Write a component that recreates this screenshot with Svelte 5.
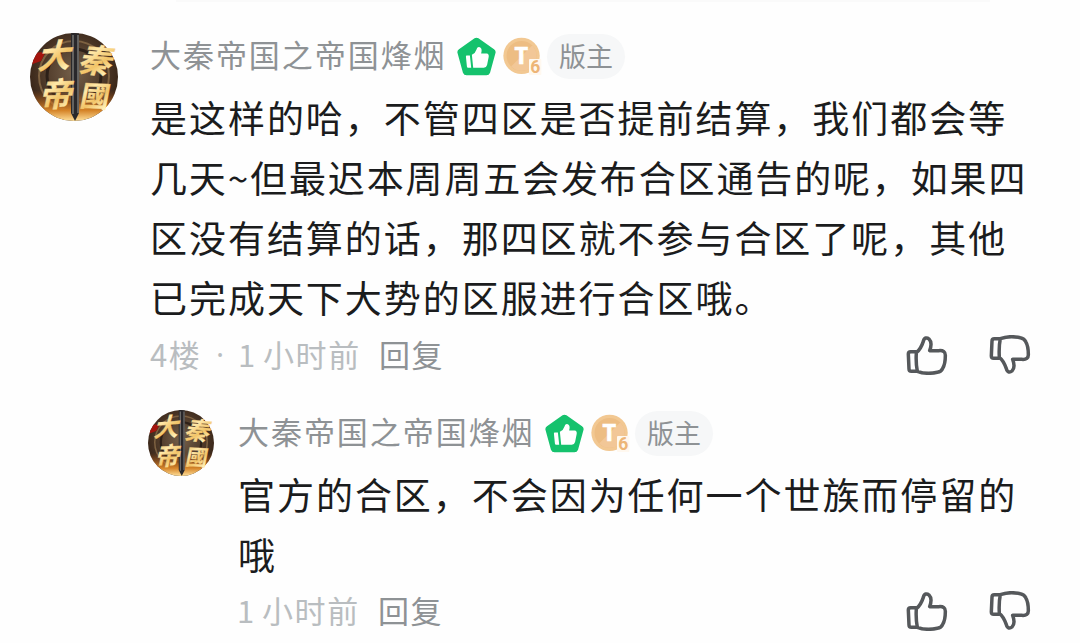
<script lang="ts">
  const author = '大秦帝国之帝国烽烟';

  const comments = [
    {
      floor: '4楼',
      time: ['1', '小时前'],
      nested: false,
      lines: [
        '是这样的哈，不管四区是否提前结算，我们都会等',
        '几天~但最迟本周周五会发布合区通告的呢，如果四',
        '区没有结算的话，那四区就不参与合区了呢，其他',
        '已完成天下大势的区服进行合区哦。'
      ]
    },
    {
      floor: '',
      time: ['1', '小时前'],
      nested: true,
      lines: ['官方的合区，不会因为任何一个世族而停留的', '哦']
    }
  ];
</script>

{#snippet thumb()}
  <path d="M30 50H14Q7 50 7 57L9 102Q9 109 16 109H34" />
  <path
    d="M31 53C40 46 47 34 52 19C55 7 63 7 69 12C76 19 77 31 71 47H98Q119 45 118 62C118 78 116 90 110 100Q106 110 94 112C75 116 50 115 34 109C30 90 30 70 31 53Z"
  />
{/snippet}

{#snippet avatar(id)}
  <svg class="avatar" viewBox="0 0 88 88">
    <defs>
      <linearGradient id="gold{id}" x1="0" y1="0" x2="0.6" y2="1">
        <stop offset="0" stop-color="#e0a94c" />
        <stop offset="0.4" stop-color="#ffe8a8" />
        <stop offset="0.7" stop-color="#f2c468" />
        <stop offset="1" stop-color="#fff0b8" />
      </linearGradient>
      <radialGradient id="bg{id}" cx="0.5" cy="0.45" r="0.55">
        <stop offset="0" stop-color="#75604a" />
        <stop offset="0.6" stop-color="#503b2a" />
        <stop offset="1" stop-color="#362316" />
      </radialGradient>
      <linearGradient id="fire{id}" x1="0" y1="0" x2="0" y2="1">
        <stop offset="0.65" stop-color="#b3591c" stop-opacity="0" />
        <stop offset="0.88" stop-color="#d58428" />
        <stop offset="1" stop-color="#ffe09a" />
      </linearGradient>
      <clipPath id="clip{id}"><circle cx="44" cy="44" r="44" /></clipPath>
    </defs>
    <g clip-path="url(#clip{id})">
      <rect width="88" height="88" fill="url(#bg{id})" />
      <circle cx="44" cy="43" r="35" fill="none" stroke="#7d6141" stroke-width="2" />
      <circle cx="44" cy="43" r="27" fill="none" stroke="#2d2018" stroke-width="3" />
      <path d="M0 25Q7 17 15 20L11 28L0 32Z" fill="#a4150e" />
      <rect width="88" height="88" fill="url(#fire{id})" />
      <path d="M41 0H49V80L45 88L41 80Z" fill="#29282b" />
      <path d="M43 2V81M48 2V80" stroke="#9d9b95" stroke-width="1" />
    </g>
    <g class="seal" fill="url(#gold{id})" stroke="url(#gold{id})">
      <text transform="translate(7 36) rotate(-4) skewX(-18)">大</text>
      <text transform="translate(47 38) rotate(5) skewX(-14)">秦</text>
      <text transform="translate(9 74) rotate(-2) skewX(-14)">帝</text>
      <text class="small" transform="translate(49 73) rotate(3) skewX(-8)">國</text>
    </g>
  </svg>
{/snippet}

<main>
  {#each comments as c, i}
    <article class:nested={c.nested}>
      {@render avatar(i)}
      <div class="content">
        <header>
          <span class="name">{author}</span>
          <svg class="official" viewBox="0 0 118 118">
            <path
              d="M53 4Q59 0 65 4L112 37Q119 42 116 50L100 108Q97 116 89 116H29Q21 116 18 108L2 50Q-1 42 6 37Z"
              fill="#15c26d"
            />
            <path
              d="M29 56H39L43 93H34Q30 93 30 89L27 60Q27 56 29 56ZM45 54Q56 49 59 38Q60 29 67 30Q78 32 73 50H90Q97 51 96 60L91 85Q89 93 81 93H49Z"
              fill="#fff"
            />
          </svg>
          <svg class="level" viewBox="0 0 120 118">
            <circle cx="57" cy="57" r="56" fill="#f2c892" />
            <circle cx="57" cy="57" r="46" fill="#edbd83" />
            <path d="M25 90L90 25A46 46 0 0 1 57 103Q38 103 25 90Z" fill="#f2c797" />
            <text class="t" x="56" y="81" text-anchor="middle">T</text>
            <rect x="80" y="67" width="38" height="49" rx="3" fill="#fff8ef" />
            <text class="six" x="99" y="111" text-anchor="middle">6</text>
          </svg>
          <span class="role">版主</span>
        </header>
        <div class="text">
          {#each c.lines as line}
            <p class:tight={line.includes('~')}>{line}</p>
          {/each}
        </div>
        <footer>
          {#if c.floor}
            <span class="floor">{c.floor}</span>
            <span class="dot">·</span>
          {/if}
          <span class="num">{c.time[0]}</span>
          <span class="ago">{c.time[1]}</span>
          <span class="reply">回复</span>
          <div class="actions">
            <svg viewBox="0 0 126 120">{@render thumb()}</svg>
            <svg class="down" viewBox="0 0 126 120">{@render thumb()}</svg>
          </div>
        </footer>
      </div>
    </article>
  {/each}
</main>

<style>
  :global(body) {
    background: #fefefe;
  }
  main {
    box-sizing: border-box;
    width: 1080px;
    height: 643px;
    padding: 33px 49px 0 30px;
    overflow: hidden;
    font-family: 'Noto Sans CJK SC', sans-serif;
    background: linear-gradient(#fafafa, #fafafa) 176px 0 / 814px 2px no-repeat;
  }
  article {
    display: flex;
    gap: 32px;
  }
  article.nested {
    gap: 24px;
    margin: 28px 0 0 118px;
  }
  .avatar {
    flex: none;
    width: 88px;
    height: 88px;
  }
  .nested .avatar {
    width: 66px;
    height: 66px;
    margin-top: -1px;
  }
  .seal {
    font-size: 33px;
    font-weight: 700;
    stroke-width: 0.3;
  }
  .small {
    font-size: 29px;
  }
  .content {
    flex: 1;
    min-width: 0;
  }
  header {
    display: flex;
    align-items: center;
    height: 46px;
    white-space: nowrap;
  }
  .nested header {
    height: 45px;
  }
  .name {
    width: 307px;
    padding-bottom: 5px;
    font-size: 31px;
    line-height: 40px;
    letter-spacing: 1.95px;
    color: #8e9295;
  }
  .official {
    width: 39px;
    height: 39px;
    margin-right: 7px;
  }
  .level {
    width: 39px;
    height: 39px;
    margin-right: 5px;
  }
  .t {
    font: 700 72px 'Open Sans', sans-serif;
    fill: #fff;
    stroke: #fff;
    stroke-width: 2;
  }
  .six {
    font: 700 54px 'Roboto', sans-serif;
    fill: #edb577;
  }
  .role {
    box-sizing: border-box;
    width: 78px;
    height: 45px;
    border-radius: 23px;
    font-size: 27px;
    line-height: 43px;
    text-align: center;
    color: #8e9295;
    background: #f6f7f8;
  }
  .text {
    padding-top: 8px;
  }
  p {
    height: 60px;
    margin: 0;
    font-size: 37px;
    line-height: 60px;
    letter-spacing: 1.96px;
    white-space: nowrap;
    color: #1b1c1d;
  }
  .tight {
    letter-spacing: 1.86px;
  }
  footer {
    display: flex;
    align-items: center;
    height: 56px;
    font-size: 31px;
    line-height: 42px;
    letter-spacing: 1.6px;
    white-space: nowrap;
    color: #b9bdc0;
  }
  .nested footer {
    height: 54px;
  }
  footer > span {
    padding-bottom: 3px;
  }
  .nested footer > span:first-child {
    margin-left: -1px;
  }
  .floor {
    width: 66px;
  }
  .dot {
    width: 22px;
    font-family: 'Open Sans', sans-serif;
    letter-spacing: 0;
  }
  .num {
    width: 25px;
  }
  .ago {
    width: 116px;
  }
  .reply {
    color: #8e9295;
  }
  .actions {
    display: flex;
    gap: 41px;
    margin-left: auto;
  }
  .actions svg {
    width: 42px;
    height: 40px;
    fill: none;
    stroke: #55585b;
    stroke-width: 10.5;
    stroke-linejoin: round;
    stroke-linecap: round;
  }
  .actions .down {
    transform: scaleY(-1);
  }
</style>
